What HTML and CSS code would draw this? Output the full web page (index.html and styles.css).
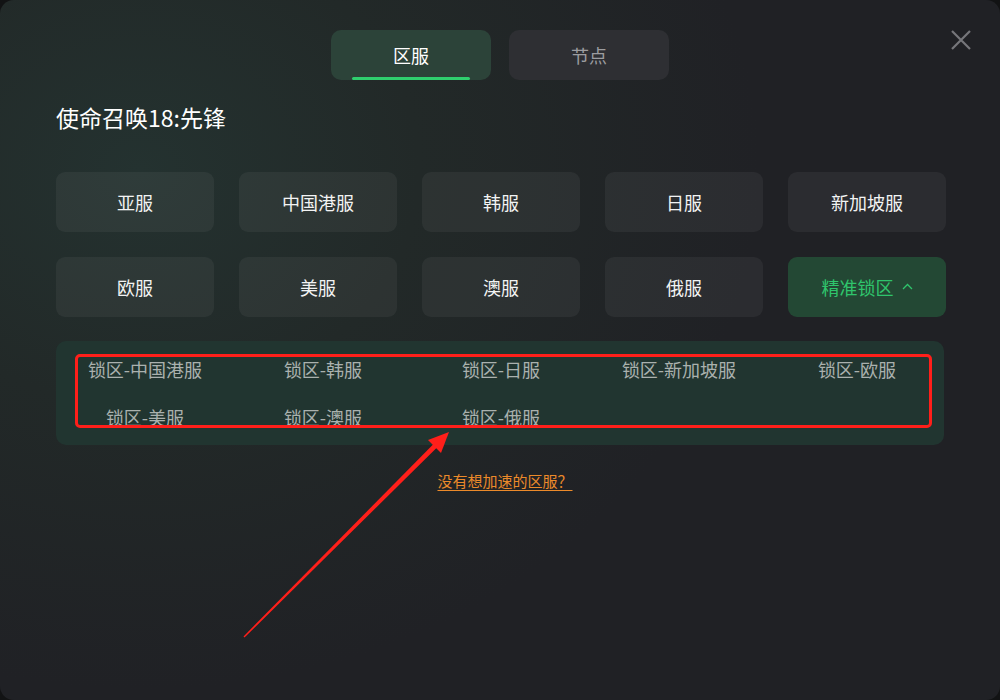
FILE: index.html
```html
<!DOCTYPE html>
<html lang="zh">
<head>
<meta charset="utf-8">
<title>区服选择</title>
<link rel="stylesheet" href="styles.css">
</head>
<body>
<div class="window">
  <button class="close" aria-label="关闭">
    <svg width="20" height="20" viewBox="0 0 20 20"><path d="M1 1L19 19M19 1L1 19" stroke="#76777b" stroke-width="2.2" fill="none"/></svg>
  </button>
  <div class="tabs">
    <div class="tab active">区服</div>
    <div class="tab">节点</div>
  </div>
  <h1 class="title">使命召唤18:先锋</h1>
  <div class="grid">
    <div class="btn">亚服</div>
    <div class="btn">中国港服</div>
    <div class="btn">韩服</div>
    <div class="btn">日服</div>
    <div class="btn">新加坡服</div>
    <div class="btn">欧服</div>
    <div class="btn">美服</div>
    <div class="btn">澳服</div>
    <div class="btn">俄服</div>
    <div class="btn lock">精准锁区<svg class="caret" width="11" height="7" viewBox="0 0 11 7"><path d="M1 6L5.5 1.5L10 6" stroke="#2fc46c" stroke-width="1.3" fill="none"/></svg></div>
  </div>
  <div class="lock-panel">
    <div class="lock-item">锁区-中国港服</div>
    <div class="lock-item">锁区-韩服</div>
    <div class="lock-item">锁区-日服</div>
    <div class="lock-item">锁区-新加坡服</div>
    <div class="lock-item">锁区-欧服</div>
    <div class="lock-item">锁区-美服</div>
    <div class="lock-item">锁区-澳服</div>
    <div class="lock-item">锁区-俄服</div>
    <div class="mark"></div>
  </div>
  <div class="more"><a href="#">没有想加速的区服？</a></div>
  <svg class="arrow" width="1000" height="700" viewBox="0 0 1000 700">
    <polygon points="243.5,636.5 244.5,637.5 441.8,442.8 438.2,439.2" fill="#ff1f1a"/>
    <polygon points="449,432 428,440 441,453" fill="#ff1f1a"/>
  </svg>
</div>
</body>
</html>
```

FILE: styles.css
```css
* { box-sizing: border-box; }
html, body { margin: 0; padding: 0; }
body {
  background: #121314;
  font-family: "Noto Sans CJK SC", "Noto Sans", sans-serif;
  width: 1000px;
  height: 700px;
  overflow: hidden;
}
.window {
  position: relative;
  width: 1000px;
  height: 700px;
  border-radius: 14px;
  background: radial-gradient(ellipse 620px 520px at 140px 170px, #243230 0%, #222928 45%, #202125 100%);
  padding: 30px 56px 0 56px;
}
.close {
  position: absolute;
  top: 30px;
  right: 29px;
  width: 20px;
  height: 20px;
  padding: 0;
  border: 0;
  background: none;
  display: flex;
}
.tabs {
  display: flex;
  justify-content: center;
  gap: 18px;
  padding-left: 0;
}
.tab {
  position: relative;
  width: 160px;
  height: 50px;
  border-radius: 10px;
  background: #2e2f33;
  color: #9c9da0;
  font-size: 18px;
  display: flex;
  align-items: center;
  justify-content: center;
}
.tab.active {
  background: #2c4339;
  color: #ffffff;
}
.tab.active::after {
  content: "";
  position: absolute;
  left: 21px;
  right: 21px;
  bottom: 0;
  height: 3px;
  border-radius: 2px;
  background: #2fcf6e;
}
.title {
  margin: 22px 0 0 0;
  font-size: 23px;
  font-weight: 400;
  line-height: 31px;
  color: #ffffff;
}
.grid {
  margin-top: 39px;
  display: grid;
  grid-template-columns: repeat(5, 158px);
  grid-auto-rows: 60px;
  gap: 25px;
}
.btn {
  border-radius: 9px;
  background: rgba(255, 255, 255, 0.05);
  color: #f2f3f3;
  font-size: 18px;
  display: flex;
  align-items: center;
  justify-content: center;
}
.btn.lock {
  background: #234834;
  color: #2fc46c;
}
.caret { margin-left: 8px; margin-top: -2px; }
.lock-panel {
  position: relative;
  margin-top: 24px;
  width: 888px;
  height: 104px;
  border-radius: 10px;
  background: #213530;
  padding: 16px 0;
  display: grid;
  grid-template-columns: repeat(5, 178px);
  grid-auto-rows: 24px;
  row-gap: 24px;
}
.lock-item {
  color: #aab1ae;
  font-size: 18px;
  line-height: 24px;
  text-align: center;
  white-space: nowrap;
}
.mark {
  position: absolute;
  left: 19px;
  top: 13px;
  width: 857px;
  height: 74px;
  border: 3.5px solid #ff1f1a;
  border-radius: 5px;
}
.more {
  margin-top: 26px;
  text-align: center;
  font-size: 15px;
  line-height: 20px;
  padding-left: 10px;
}
.more a {
  color: #ec8a2a;
  text-decoration: underline;
  text-underline-offset: 3px;
}
.arrow {
  position: absolute;
  left: 0;
  top: 0;
  pointer-events: none;
}
```
